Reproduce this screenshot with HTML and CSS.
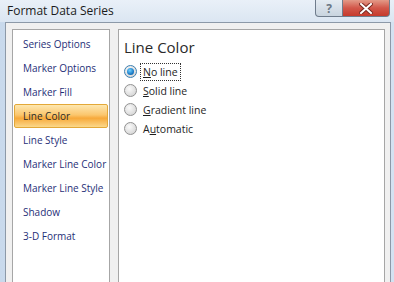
FILE: index.html
```html
<!DOCTYPE html>
<html lang="en">
<head>
    <meta charset="UTF-8">
    <title>Format Data Series</title>
    <link rel="stylesheet" href="styles.css">
</head>
<body>
    <div class="window">
        <!-- Title bar -->
        <div class="titlebar">
            <span class="title">Format Data Series</span>
            <div class="controls">
                <span class="btn help">?</span>
                <span class="btn close">
                    <svg width="14" height="11" viewBox="0 0 14 11">
                        <path d="M2 1 L12 10 M12 1 L2 10" stroke="#7a2a22" stroke-width="4" stroke-linecap="square"/>
                        <path d="M2 1 L12 10 M12 1 L2 10" stroke="#fff" stroke-width="2" stroke-linecap="square"/>
                    </svg>
                </span>
            </div>
        </div>

        <div class="client">
            <ul class="nav">
                <li>Series Options</li>
                <li>Marker Options</li>
                <li>Marker Fill</li>
                <li class="active">Line Color</li>
                <li>Line Style</li>
                <li>Marker Line Color</li>
                <li>Marker Line Style</li>
                <li>Shadow</li>
                <li>3-D Format</li>
            </ul>

            <div class="pane">
                <h2>Line Color</h2>
                <div class="option">
                    <span class="radio checked"></span>
                    <span class="label focus"><u>N</u>o line</span>
                </div>
                <div class="option">
                    <span class="radio"></span>
                    <span class="label"><u>S</u>olid line</span>
                </div>
                <div class="option">
                    <span class="radio"></span>
                    <span class="label"><u>G</u>radient line</span>
                </div>
                <div class="option">
                    <span class="radio"></span>
                    <span class="label">A<u>u</u>tomatic</span>
                </div>
            </div>
        </div>
    </div>
</body>
</html>
```

FILE: styles.css
```css
body { margin: 0; font-family: "Open Sans", "DejaVu Sans", sans-serif; overflow: hidden; }

.window {
    width: 394px;
    height: 282px;
    overflow: hidden;
    background: linear-gradient(to right, #c8d9ec, #dae6f3 40%, #d4e2f1);
    padding: 0 3px 0 5px;
    box-sizing: border-box;
}

/* Title bar */
.titlebar {
    height: 22px;
    display: flex;
    align-items: flex-start;
    justify-content: space-between;
    margin: 0 -3px 0 -5px;
    padding-left: 7px;
    background: linear-gradient(to bottom, #e9f0f8, #dbe6f2);
}
.title {
    font-size: 12px;
    line-height: 22px;
    color: #1b1b1b;
}
.controls { display: flex; margin-right: 4px; }
.btn {
    height: 17px;
    box-sizing: border-box;
    border: 1px solid #6f7c8c;
    border-top: none;
    display: flex;
    align-items: center;
    justify-content: center;
}
.help {
    width: 28px;
    border-radius: 0 0 0 4px;
    background: linear-gradient(to bottom, #e4ebf2, #c9d4df);
    color: #6b7785;
    font-size: 12px;
    font-weight: bold;
}
.close {
    width: 47px;
    border-left: none;
    border-radius: 0 0 4px 0;
    background: linear-gradient(to bottom, #e39a88, #d2574a 50%, #c53a2c);
}

/* Dialog body */
.client {
    height: 260px;
    box-sizing: border-box;
    overflow: hidden;
    background: #f0f0f0;
    border: 1px solid #8c99a8;
    border-bottom: none;
    padding: 6px 5px 0 6px;
    display: flex;
    gap: 8px;
}

.nav {
    list-style: none;
    margin: 0;
    width: 98px;
    height: 260px;
    flex-shrink: 0;
    box-sizing: border-box;
    padding: 2px 1px 0 1px;
    background: #fff;
    border: 1px solid #a6a6a6;
}
.nav li {
    height: 24px;
    line-height: 24px;
    padding-left: 9px;
    font-size: 10px;
    color: #1f2f78;
    white-space: nowrap;
    box-sizing: border-box;
}
.nav li.active {
    border: 1px solid #e3a838;
    border-radius: 2px;
    line-height: 22px;
    padding-left: 8px;
    background: linear-gradient(to bottom, #fde7b0, #fbc66d 45%, #f7a93a 60%, #fbd88a);
    color: #2a2a2a;
}

.pane {
    flex: 1;
    height: 260px;
    box-sizing: border-box;
    background: #fff;
    border: 1px solid #a6a6a6;
    padding: 6px 0 0 5px;
}
.pane h2 {
    margin: 0 0 4px 0;
    font-size: 15px;
    font-weight: normal;
    line-height: 22px;
    color: #2a2a2a;
}

.option {
    height: 19px;
    display: flex;
    align-items: center;
    gap: 3px;
}
.radio {
    width: 11px;
    height: 11px;
    border-radius: 50%;
    border: 1px solid #929292;
    background: radial-gradient(circle at 40% 35%, #fafafa, #d6d6d6 80%);
    position: relative;
}
.radio.checked {
    border-color: #3c7fb1;
}
.radio.checked::after {
    content: "";
    position: absolute;
    left: 2px;
    top: 2px;
    width: 7px;
    height: 7px;
    border-radius: 50%;
    background: radial-gradient(circle at 40% 35%, #6fd0ff, #1b7cc8 60%, #0c4a86);
}
.label {
    font-size: 10.5px;
    color: #1e1e1e;
    padding: 1px 2px;
    border: 1px solid transparent;
}
.label.focus { border: 1px dotted #333; }
```
